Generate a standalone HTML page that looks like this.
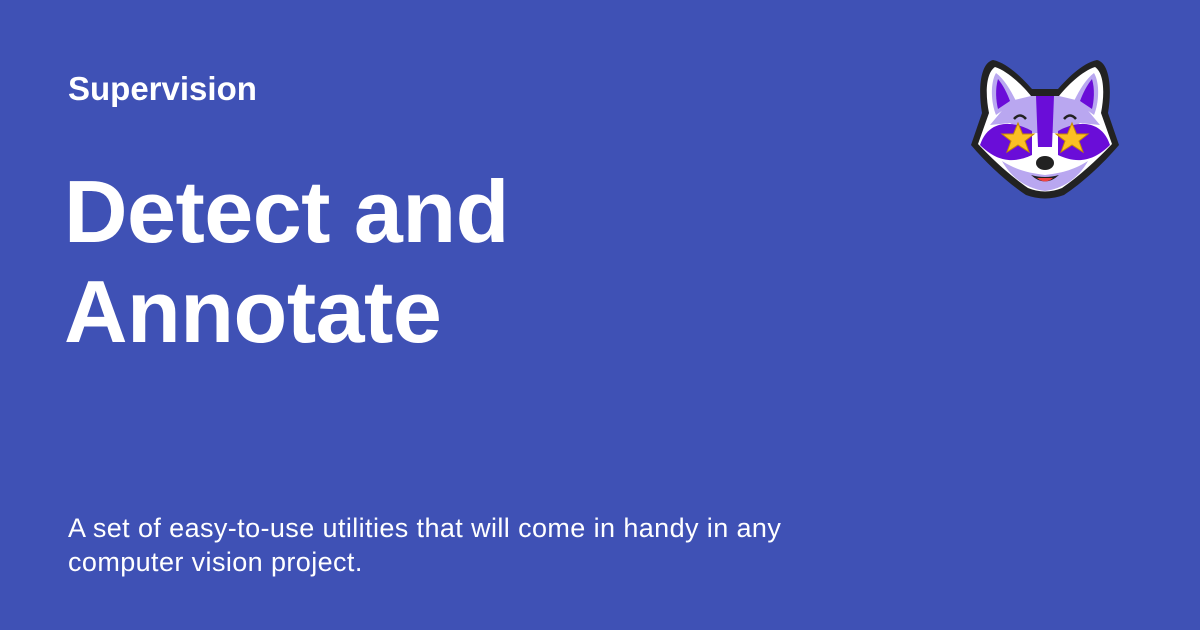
<!DOCTYPE html>
<html><head><style>
body{margin:0;width:1200px;height:630px;background:#3f51b5;overflow:hidden;font-family:"Liberation Sans",sans-serif;color:#fff;position:relative}
.s{position:absolute;left:68px;top:70px;font-size:33px;font-weight:bold}
.t{position:absolute;left:64px;top:162px;font-size:88px;font-weight:bold;line-height:100px;letter-spacing:-0.5px}
.d{position:absolute;left:68px;top:511px;font-size:27px;line-height:34px;letter-spacing:0.4px}
svg{position:absolute;left:960px;top:55px}
</style></head><body>
<div class="s">Supervision</div>
<div class="t">Detect and<br>Annotate</div>
<div class="d">A set of easy-to-use utilities that will come in handy in any<br>computer vision project.</div>
<svg width="170" height="150" viewBox="0 0 170 150">
<path d="M33 5 C20 8 18 35 22 58 L11 90 C28 110 48 128 66 140 Q85 147 104 140 C122 128 142 110 159 90 L148 58 C152 35 150 8 137 5 C122 8 106 25 98 34 L72 34 C64 25 48 8 33 5Z" fill="#222"/>
<path d="M35 12 C26 18 25 38 29 58 L18 89 C34 106 52 122 68 133 Q85 140 102 133 C118 122 136 106 152 89 L141 58 C145 38 144 18 135 12 C122 16 106 32 99 41 L71 41 C64 32 48 16 35 12Z" fill="#fff"/>
<path d="M36 18 C30 28 31 48 36 60 L56 46 C50 34 44 24 36 18Z" fill="#b9a7f0"/>
<path d="M134 18 C140 28 139 48 134 60 L114 46 C120 34 126 24 134 18Z" fill="#b9a7f0"/>
<path d="M38 24 C35 34 36 46 38 54 L50 46 C47 38 43 30 38 24Z" fill="#6a0dd8"/>
<path d="M132 24 C135 34 134 46 132 54 L120 46 C123 38 127 30 132 24Z" fill="#6a0dd8"/>
<path d="M50 46 L71 41 L99 41 L120 46 L140 70 L120 68 L105 78 L65 78 L50 68 L30 70Z" fill="#b9a7f0"/>
<path d="M76 41 L94 41 L92 92 L78 92Z" fill="#6a0dd8"/>
<path d="M20 90 C28 66 50 64 72 76 L72 100 C55 108 38 108 20 90Z" fill="#6a0dd8"/>
<path d="M150 90 C142 66 120 64 98 76 L98 100 C115 108 132 108 150 90Z" fill="#6a0dd8"/>
<path d="M42 106 C58 116 70 118 85 120 C100 118 112 116 128 106 C118 124 102 134 85 136 C68 134 52 124 42 106Z" fill="#b9a7f0"/>
<g fill="#fbbf24" stroke="#c88a00" stroke-width="1">
<polygon points="58,68 62.5,79 74,79 65,86 69,97 58,90 47,97 51,86 42,79 53.5,79"/>
<polygon points="112,68 116.5,79 128,79 119,86 123,97 112,90 101,97 105,86 96,79 107.5,79"/>
</g>
<ellipse cx="85" cy="108" rx="9" ry="7" fill="#222"/>
<path d="M71 120 Q85 133 99 120 Q85 124 71 120Z" fill="#222"/>
<path d="M77 123 Q85 130 93 123Z" fill="#ef4444"/>
<path d="M54 64 Q60 57 66 64 M104 64 Q110 57 116 64" stroke="#222" stroke-width="2.5" fill="none"/>
</svg>
</body></html>
